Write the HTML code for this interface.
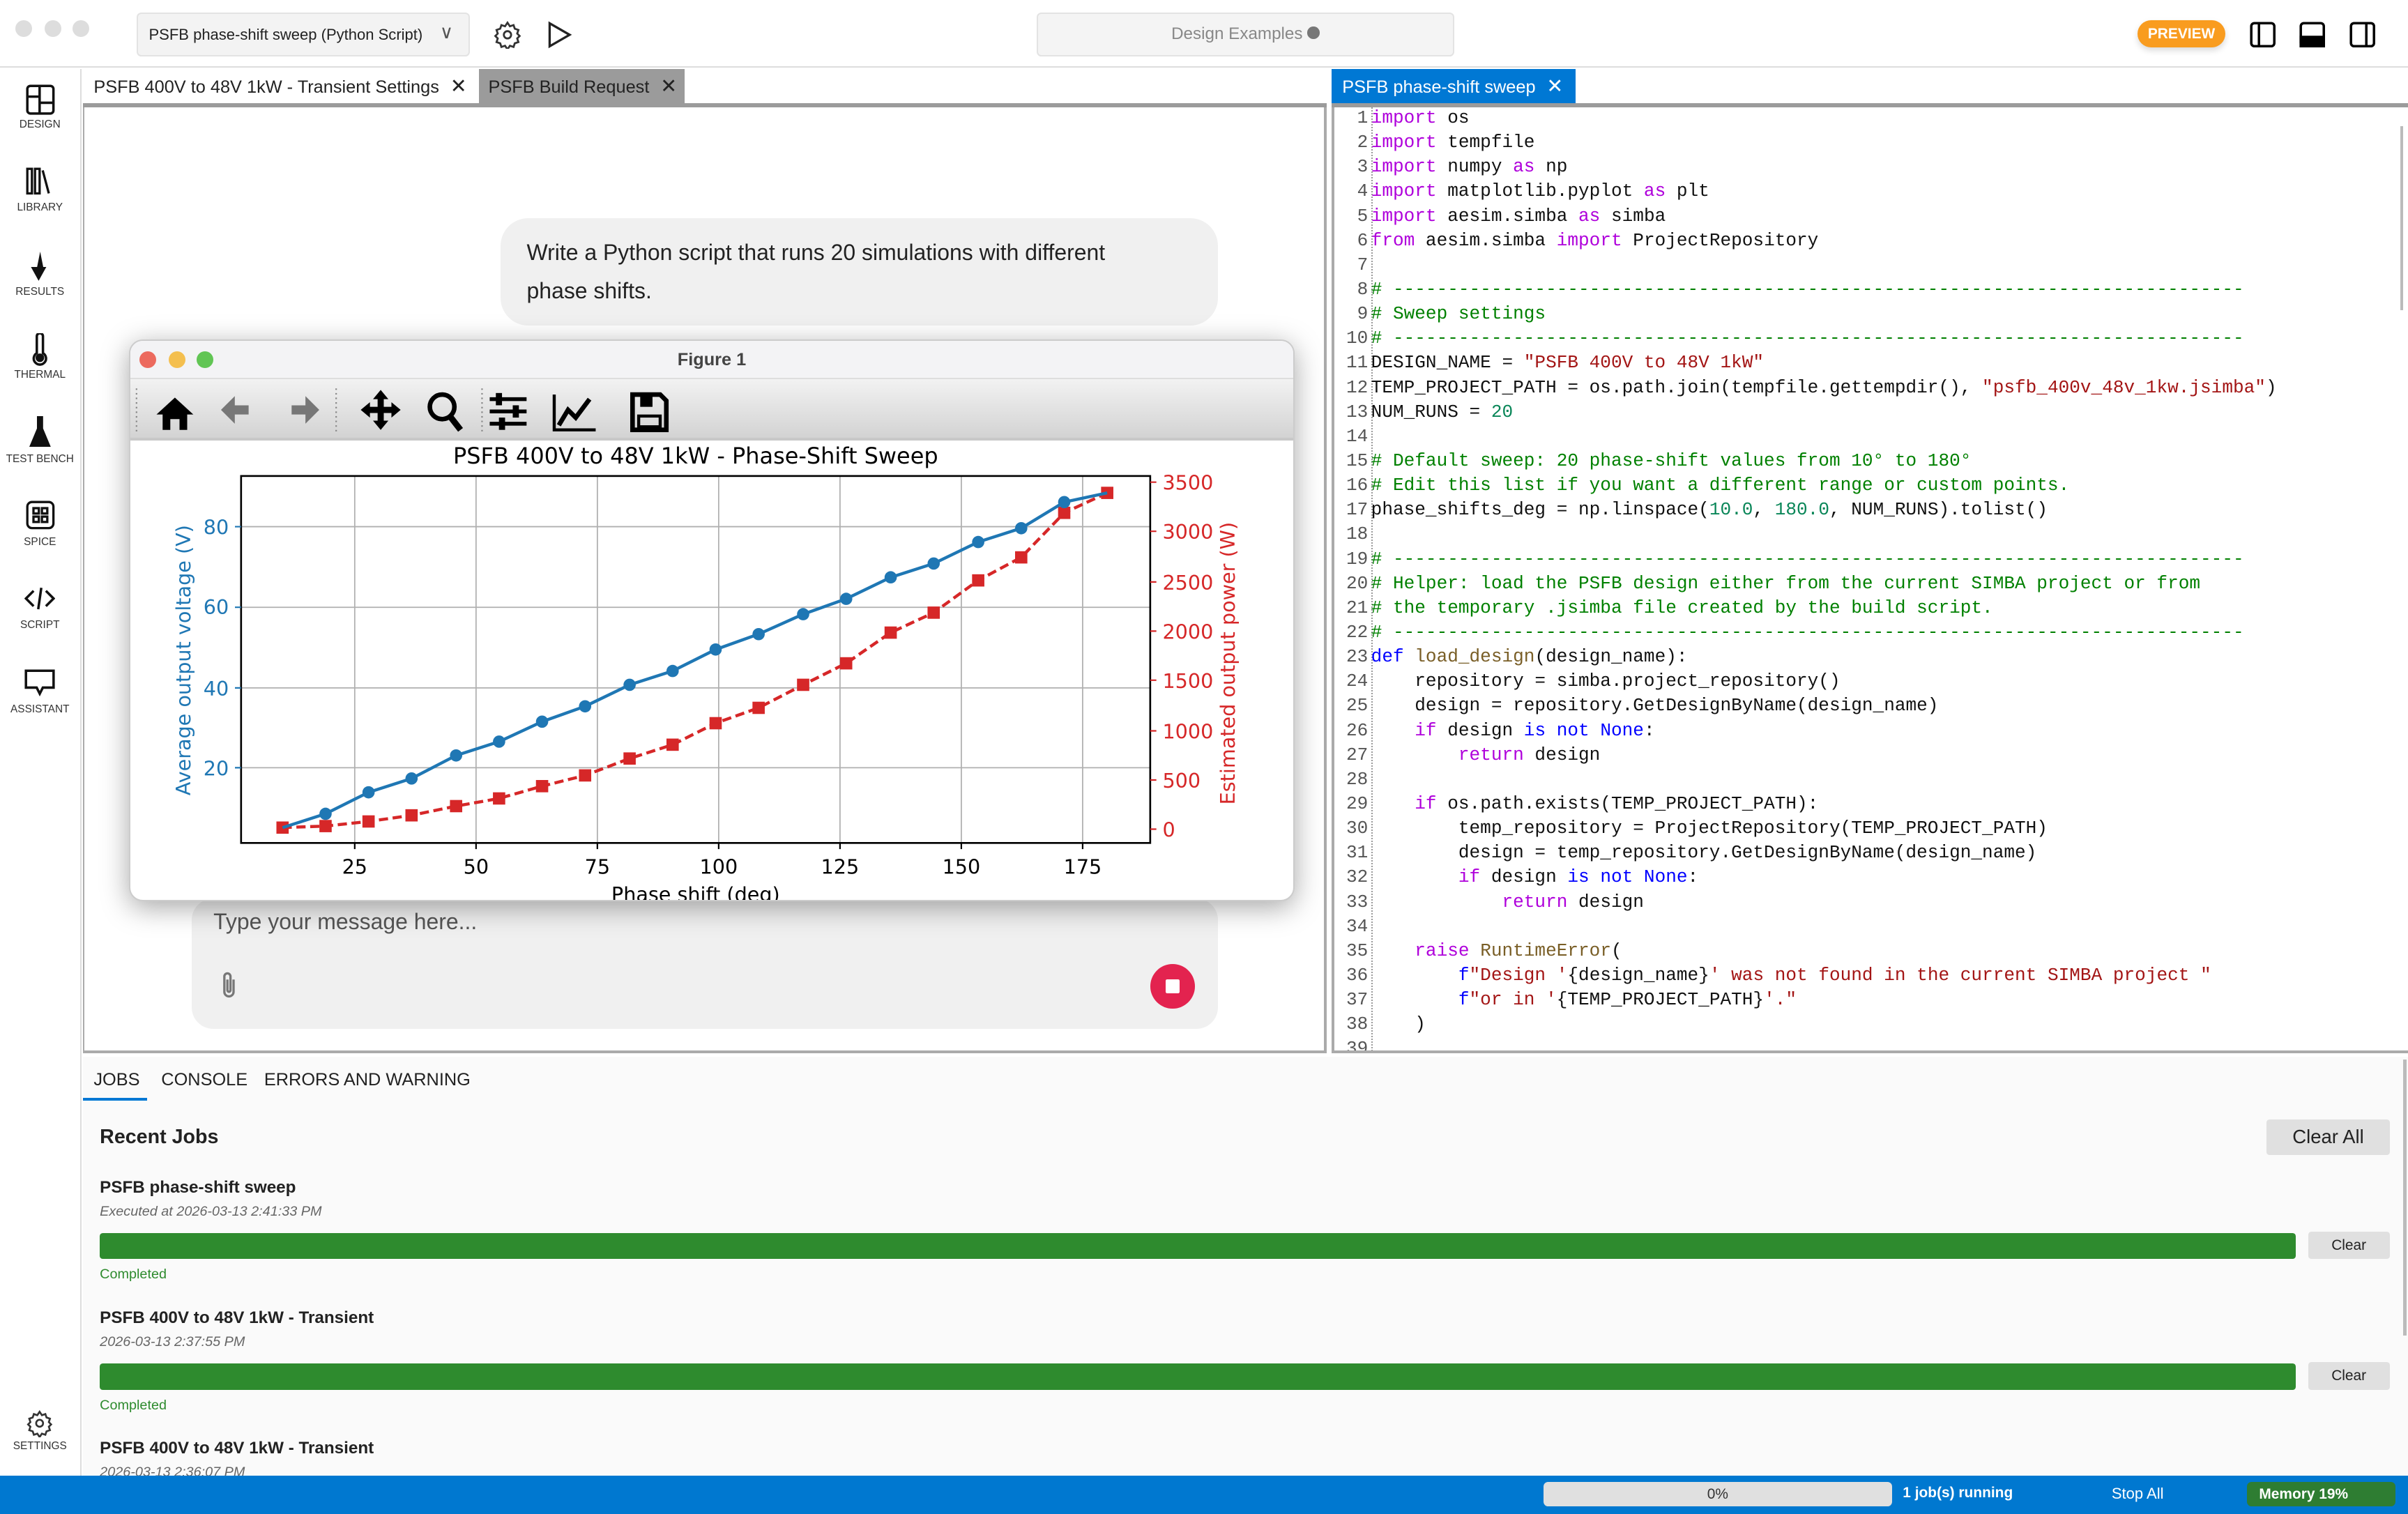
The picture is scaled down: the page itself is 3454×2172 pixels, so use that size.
<!DOCTYPE html>
<html><head><meta charset="utf-8">
<style>
*{box-sizing:border-box;margin:0;padding:0}
html,body{width:3454px;height:2172px;overflow:hidden;background:#fff}
#r{zoom:2.20281;width:1568px;height:986px;position:relative;font-family:"Liberation Sans",sans-serif;color:#222;overflow:hidden;background:#fff}
.a{position:absolute}
.side .it{position:absolute;left:0;width:52px;text-align:center;font-size:7px;color:#333}
.code{font-family:"Liberation Mono",monospace;font-size:11.84px;line-height:15.95px;white-space:pre;color:#111}
.ln{color:#555;text-align:right;width:23px;display:inline-block;padding-right:2px}
.k{color:#af00db}.b{color:#0000ff}.s{color:#a31515}.n{color:#098658}.c{color:#008000}.f{color:#795e26}
</style></head><body><div id="r">
<!-- top bar -->
<div class="a" style="left:0;top:0;width:1568px;height:44px;border-bottom:1px solid #ddd;background:#fff"></div>
<div class="a" style="left:10px;top:13px;width:11px;height:11px;border-radius:50%;background:#ddd"></div>
<div class="a" style="left:29px;top:13px;width:11px;height:11px;border-radius:50%;background:#ddd"></div>
<div class="a" style="left:47px;top:13px;width:11px;height:11px;border-radius:50%;background:#ddd"></div>
<div class="a" style="left:89px;top:8px;width:217px;height:29px;background:#f3f3f3;border:1px solid #e3e3e3;border-radius:3px;font-size:10px;padding:8px 7px">PSFB phase-shift sweep (Python Script)<span style="position:absolute;right:10px;top:5px;font-size:12px;color:#555">&#8744;</span></div>
<svg class="a" style="left:321px;top:13px" width="19" height="19" viewBox="0 0 24 24" fill="none" stroke="#333" stroke-width="1.6"><circle cx="12" cy="12" r="3"/><path d="M12 2l2 3 3-1 1 3 3 1-1 3 2 2-2 2 1 3-3 1-1 3-3-1-2 3-2-3-3 1-1-3-3-1 1-3-2-2 2-2-1-3 3-1 1-3 3 1z"/></svg>
<svg class="a" style="left:356px;top:13px" width="17" height="19" viewBox="0 0 17 19" fill="none" stroke="#222" stroke-width="1.5"><path d="M2 2 L15 9.5 L2 17 Z"/></svg>
<div class="a" style="left:675px;top:8px;width:272px;height:29px;background:#f4f4f4;border:1px solid #e3e3e3;border-radius:3px;font-size:11px;color:#888;text-align:center;padding-top:7px">Design Examples <span style="display:inline-block;width:8px;height:8px;border-radius:50%;background:#777"></span></div>
<div class="a" style="left:1392px;top:13px;width:57px;height:18px;border-radius:9px;background:#f99c1f;color:#fff;font-weight:bold;font-size:9.5px;text-align:center;line-height:18px;box-shadow:0 2px 4px rgba(0,0,0,.15)">PREVIEW</div>
<svg class="a" style="left:1465px;top:14px" width="17" height="17" viewBox="0 0 17 17" fill="none" stroke="#000" stroke-width="1.6"><rect x="1" y="1" width="15" height="15" rx="2"/><path d="M6 1v15"/></svg>
<svg class="a" style="left:1497px;top:14px" width="17" height="17" viewBox="0 0 17 17" stroke="#000" stroke-width="1.6"><rect x="1" y="1" width="15" height="15" rx="2" fill="none"/><rect x="1" y="10" width="15" height="6" fill="#000"/></svg>
<svg class="a" style="left:1530px;top:14px" width="17" height="17" viewBox="0 0 17 17" fill="none" stroke="#000" stroke-width="1.6"><rect x="1" y="1" width="15" height="15" rx="2"/><path d="M11 1v15"/></svg>

<!-- sidebar -->
<div class="side a" style="left:0;top:45px;width:53px;height:916px;background:#fff;border-right:1px solid #ddd">
<svg class="a" style="left:17px;top:10px" width="19" height="20" viewBox="0 0 19 20" fill="none" stroke="#111" stroke-width="1.6"><rect x="1" y="1" width="17" height="18" rx="2"/><path d="M9 1v18M1 8h8M9 12h9"/></svg>
<div class="it" style="top:32px">DESIGN</div>
<svg class="a" style="left:17px;top:64px" width="19" height="18" viewBox="0 0 19 18" fill="none" stroke="#111" stroke-width="1.5"><rect x="1" y="1" width="3" height="16"/><rect x="6" y="1" width="3" height="16"/><path d="M11 2l4 15"/></svg>
<div class="it" style="top:86px">LIBRARY</div>
<svg class="a" style="left:18px;top:119px" width="15" height="20" viewBox="0 0 15 20" fill="#111"><path d="M8 0 L10 10 L6 10 Z M2 10 L12 10 L7 19 Z"/></svg>
<div class="it" style="top:141px">RESULTS</div>
<svg class="a" style="left:20px;top:172px" width="12" height="22" viewBox="0 0 12 22" fill="none" stroke="#111" stroke-width="1.6"><path d="M4 2a2 2 0 014 0v11a4 4 0 11-4 0z"/><circle cx="6" cy="16" r="2" fill="#111"/></svg>
<div class="it" style="top:195px">THERMAL</div>
<svg class="a" style="left:19px;top:226px" width="14" height="20" viewBox="0 0 14 20" fill="#111"><path d="M5 0h4v8l5 12H0l5-12z"/></svg>
<div class="it" style="top:250px">TEST BENCH</div>
<svg class="a" style="left:17px;top:281px" width="19" height="19" viewBox="0 0 19 19" fill="none" stroke="#111" stroke-width="1.5"><rect x="1" y="1" width="17" height="17" rx="3"/><rect x="5" y="5" width="3.5" height="3.5"/><rect x="10.5" y="5" width="3.5" height="3.5"/><rect x="5" y="10.5" width="3.5" height="3.5"/><rect x="10.5" y="10.5" width="3.5" height="3.5"/></svg>
<div class="it" style="top:304px">SPICE</div>
<svg class="a" style="left:16px;top:337px" width="20" height="16" viewBox="0 0 20 16" fill="none" stroke="#111" stroke-width="1.6"><path d="M6 3L1 8l5 5M14 3l5 5-5 5M11 1L9 15"/></svg>
<div class="it" style="top:358px">SCRIPT</div>
<svg class="a" style="left:16px;top:391px" width="20" height="18" viewBox="0 0 20 18" fill="none" stroke="#111" stroke-width="1.6"><path d="M1 1h18v11H12l-2 4-2-4H1z"/></svg>
<div class="it" style="top:413px">ASSISTANT</div>
<svg class="a" style="left:17px;top:873px" width="18" height="18" viewBox="0 0 24 24" fill="none" stroke="#333" stroke-width="1.6"><circle cx="12" cy="12" r="3"/><path d="M12 2l2 3 3-1 1 3 3 1-1 3 2 2-2 2 1 3-3 1-1 3-3-1-2 3-2-3-3 1-1-3-3-1 1-3-2-2 2-2-1-3 3-1 1-3 3 1z"/></svg>
<div class="it" style="top:893px">SETTINGS</div>
</div>

<!-- left tabs -->
<div class="a" style="left:54px;top:45px;width:258px;height:22px;font-size:11.5px;padding:3px 7px;white-space:nowrap">PSFB 400V to 48V 1kW - Transient Settings <span style="margin-left:4px;font-size:13px">&#10005;</span></div>
<div class="a" style="left:312px;top:45px;width:134px;height:22px;background:#9b9b9b;font-size:11.5px;padding:3px 6px;white-space:nowrap">PSFB Build Request <span style="margin-left:4px;font-size:13px">&#10005;</span></div>
<div class="a" style="left:54px;top:67px;width:810px;height:3px;background:#9b9b9b"></div>
<div class="a" style="left:54px;top:70px;width:810px;height:616px;border-left:1px solid #aaa;border-right:2px solid #aaa;border-bottom:2px solid #aaa;background:#fff"></div>
<div class="a" style="left:326px;top:142px;width:467px;height:70px;border-radius:18px;background:#f0f0f0;font-size:14.5px;line-height:25px;padding:10px 30px 10px 17px;color:#222">Write a Python script that runs 20 simulations with different phase shifts.</div>
<div class="a" style="left:125px;top:585px;width:668px;height:85px;border-radius:14px;background:#f0f0f0;font-size:14.5px;color:#555;padding:7px 14px">Type your message here...</div>
<svg class="a" style="left:142px;top:632px" width="14" height="20" viewBox="0 0 14 20" fill="none" stroke="#777" stroke-width="1.5"><path d="M10 6v8a3 3 0 01-6 0V4a2 2 0 014 0v9a1 1 0 01-2 0V6"/></svg>
<div class="a" style="left:749px;top:628px;width:29px;height:29px;border-radius:50%;background:#e3234f"><div style="margin:10px;width:9px;height:9px;background:#fff;border-radius:1px"></div></div>

<!-- figure window -->
<div class="a" style="left:84px;top:221px;width:759px;height:366px;border-radius:9px;background:#fff;box-shadow:0 4px 18px rgba(0,0,0,.35);border:1px solid #ccc;overflow:hidden">
<div style="height:25px;background:#f3f3f5;border-bottom:1px solid #ddd;text-align:center;font-size:11.5px;font-weight:bold;color:#444;padding-top:6px">Figure 1</div>
<div class="a" style="left:6px;top:7px;width:11px;height:11px;border-radius:50%;background:#ec6a5e"></div>
<div class="a" style="left:25px;top:7px;width:11px;height:11px;border-radius:50%;background:#f4bf4f"></div>
<div class="a" style="left:43px;top:7px;width:11px;height:11px;border-radius:50%;background:#61c554"></div>
<div style="height:40px;background:linear-gradient(#f2f2f2,#d3d3d3);border-bottom:2px solid #c8c8c8;position:relative">
<svg class="a" style="left:0;top:0" width="360" height="40" viewBox="0 0 360 40">
<g stroke="#888" stroke-dasharray="1,2"><path d="M4 6v30M134 6v30M229 6v30"/></g>
<path d="M29 12 L17 23 h4 v10 h5 v-7 h6 v7 h5 V23 h4 Z" fill="#000"/>
<path d="M59 20 l9-9 v6 h9 v6 h-9 v6 z" fill="#777"/>
<path d="M123 20 l-9-9 v6 h-9 v6 h9 v6 z" fill="#777"/>
<g fill="#000"><path d="M163 7l-5 6h3v5h-5v-3l-6 5 6 5v-3h5v5h-3l5 6 5-6h-3v-5h5v3l6-5-6-5v3h-5v-5h3z"/></g>
<circle cx="203" cy="18" r="8" fill="none" stroke="#000" stroke-width="3"/><path d="M208 24l7 9" stroke="#000" stroke-width="4"/>
<g stroke="#000" stroke-width="2.5"><path d="M234 13h24M234 21h24M234 29h24"/></g><g fill="#000"><rect x="238" y="9" width="4" height="8"/><rect x="249" y="17" width="4" height="8"/><rect x="240" y="25" width="4" height="8"/></g>
<path d="M276 10v23h27" stroke="#000" stroke-width="2" fill="none"/><path d="M279 30l6-10 5 5 9-12" stroke="#000" stroke-width="3" fill="none"/>
<path d="M327 10h18l4 4v19h-22z" fill="none" stroke="#000" stroke-width="3"/><rect x="332" y="11" width="8" height="7" fill="#000"/><rect x="331" y="24" width="14" height="7" fill="none" stroke="#000" stroke-width="2"/>
</svg></div>
</div>
<!-- plot (page coordinates) -->
<svg class="a" style="left:84px;top:286px" width="759" height="300" viewBox="84 286 759 300" font-family="DejaVu Sans, sans-serif">
<text x="453" y="302" font-size="14.5" text-anchor="middle" fill="#000">PSFB 400V to 48V 1kW - Phase-Shift Sweep</text>
<g stroke="#b0b0b0" stroke-width="0.8">
<path d="M231 310v239M310 310v239M389 310v239M468 310v239M547 310v239M626 310v239M705 310v239"/>
<path d="M157 343h592M157 395.5h592M157 448h592M157 500h592"/>
</g>
<rect x="157" y="310" width="592" height="239" fill="none" stroke="#000" stroke-width="1.2"/>
<g stroke="#000" stroke-width="1"><path d="M231 549v4M310 549v4M389 549v4M468 549v4M547 549v4M626 549v4M705 549v4"/></g>
<g font-size="13" fill="#000" text-anchor="middle"><text x="231" y="569">25</text><text x="310" y="569">50</text><text x="389" y="569">75</text><text x="468" y="569">100</text><text x="547" y="569">125</text><text x="626" y="569">150</text><text x="705" y="569">175</text></g>
<text x="453" y="587" font-size="13" text-anchor="middle" fill="#000">Phase shift (deg)</text>
<g fill="#1f77b4" font-size="13" text-anchor="end"><text x="149" y="348">80</text><text x="149" y="400">60</text><text x="149" y="453">40</text><text x="149" y="505">20</text></g>
<g stroke="#1f77b4"><path d="M153 343h4M153 395.5h4M153 448h4M153 500h4"/></g>
<text transform="translate(124 430) rotate(-90)" font-size="13" fill="#1f77b4" text-anchor="middle">Average output voltage (V)</text>
<g stroke="#d62728"><path d="M749 314h4M749 346h4M749 379h4M749 411h4M749 443h4M749 476h4M749 508h4M749 540h4"/></g>
<g fill="#d62728" font-size="13"><text x="757" y="319">3500</text><text x="757" y="351">3000</text><text x="757" y="384">2500</text><text x="757" y="416">2000</text><text x="757" y="448">1500</text><text x="757" y="481">1000</text><text x="757" y="513">500</text><text x="757" y="545">0</text></g>
<text transform="translate(804 432) rotate(-90)" font-size="13" fill="#d62728" text-anchor="middle">Estimated output power (W)</text>
<polyline fill="none" stroke="#d62728" stroke-width="2" stroke-dasharray="6,3" points="184,539 212,538 240,535 268,531 297,525 325,520 353,512 381,505 410,494 438,485 466,471 494,461 523,446 551,432 580,412 608,399 637,378 665,363 693,334 721,321"/>
<g fill="#d62728"><rect x="180" y="535" width="8" height="8"/><rect x="208" y="534" width="8" height="8"/><rect x="236" y="531" width="8" height="8"/><rect x="264" y="527" width="8" height="8"/><rect x="293" y="521" width="8" height="8"/><rect x="321" y="516" width="8" height="8"/><rect x="349" y="508" width="8" height="8"/><rect x="377" y="501" width="8" height="8"/><rect x="406" y="490" width="8" height="8"/><rect x="434" y="481" width="8" height="8"/><rect x="462" y="467" width="8" height="8"/><rect x="490" y="457" width="8" height="8"/><rect x="519" y="442" width="8" height="8"/><rect x="547" y="428" width="8" height="8"/><rect x="576" y="408" width="8" height="8"/><rect x="604" y="395" width="8" height="8"/><rect x="633" y="374" width="8" height="8"/><rect x="661" y="359" width="8" height="8"/><rect x="689" y="330" width="8" height="8"/><rect x="717" y="317" width="8" height="8"/></g>
<polyline fill="none" stroke="#1f77b4" stroke-width="2" points="184,539 212,530 240,516 268,507 297,492 325,483 353,470 381,460 410,446 438,437 466,423 494,413 523,400 551,390 580,376 608,367 637,353 665,344 693,327 721,321"/>
<g fill="#1f77b4"><circle cx="212" cy="530" r="4"/><circle cx="240" cy="516" r="4"/><circle cx="268" cy="507" r="4"/><circle cx="297" cy="492" r="4"/><circle cx="325" cy="483" r="4"/><circle cx="353" cy="470" r="4"/><circle cx="381" cy="460" r="4"/><circle cx="410" cy="446" r="4"/><circle cx="438" cy="437" r="4"/><circle cx="466" cy="423" r="4"/><circle cx="494" cy="413" r="4"/><circle cx="523" cy="400" r="4"/><circle cx="551" cy="390" r="4"/><circle cx="580" cy="376" r="4"/><circle cx="608" cy="367" r="4"/><circle cx="637" cy="353" r="4"/><circle cx="665" cy="344" r="4"/><circle cx="693" cy="327" r="4"/></g>
</svg>

<!-- right editor -->
<div class="a" style="left:867px;top:45px;width:159px;height:22px;background:#0078d4;color:#fff;font-size:11.5px;padding:3px 7px;white-space:nowrap">PSFB phase-shift sweep <span style="margin-left:4px;font-size:13px">&#10005;</span></div>
<div class="a" style="left:867px;top:67px;width:701px;height:3px;background:#9b9b9b"></div>
<div class="a" style="left:867px;top:70px;width:701px;height:616px;border-left:2px solid #aaa;border-bottom:2px solid #aaa;overflow:hidden;background:#fff">
<div class="a" style="left:24px;top:0;height:620px;border-left:1px dotted #999"></div>
<div class="a code" style="left:1px;top:-1px"><span class="ln">1</span><span class="k">import</span> os
<span class="ln">2</span><span class="k">import</span> tempfile
<span class="ln">3</span><span class="k">import</span> numpy <span class="k">as</span> np
<span class="ln">4</span><span class="k">import</span> matplotlib.pyplot <span class="k">as</span> plt
<span class="ln">5</span><span class="k">import</span> aesim.simba <span class="k">as</span> simba
<span class="ln">6</span><span class="k">from</span> aesim.simba <span class="k">import</span> ProjectRepository
<span class="ln">7</span>
<span class="ln">8</span><span class="c"># ------------------------------------------------------------------------------</span>
<span class="ln">9</span><span class="c"># Sweep settings</span>
<span class="ln">10</span><span class="c"># ------------------------------------------------------------------------------</span>
<span class="ln">11</span>DESIGN_NAME = <span class="s">"PSFB 400V to 48V 1kW"</span>
<span class="ln">12</span>TEMP_PROJECT_PATH = os.path.join(tempfile.gettempdir(), <span class="s">"psfb_400v_48v_1kw.jsimba"</span>)
<span class="ln">13</span>NUM_RUNS = <span class="n">20</span>
<span class="ln">14</span>
<span class="ln">15</span><span class="c"># Default sweep: 20 phase-shift values from 10° to 180°</span>
<span class="ln">16</span><span class="c"># Edit this list if you want a different range or custom points.</span>
<span class="ln">17</span>phase_shifts_deg = np.linspace(<span class="n">10.0</span>, <span class="n">180.0</span>, NUM_RUNS).tolist()
<span class="ln">18</span>
<span class="ln">19</span><span class="c"># ------------------------------------------------------------------------------</span>
<span class="ln">20</span><span class="c"># Helper: load the PSFB design either from the current SIMBA project or from</span>
<span class="ln">21</span><span class="c"># the temporary .jsimba file created by the build script.</span>
<span class="ln">22</span><span class="c"># ------------------------------------------------------------------------------</span>
<span class="ln">23</span><span class="b">def</span> <span class="f">load_design</span>(design_name):
<span class="ln">24</span>    repository = simba.project_repository()
<span class="ln">25</span>    design = repository.GetDesignByName(design_name)
<span class="ln">26</span>    <span class="k">if</span> design <span class="b">is not None</span>:
<span class="ln">27</span>        <span class="k">return</span> design
<span class="ln">28</span>
<span class="ln">29</span>    <span class="k">if</span> os.path.exists(TEMP_PROJECT_PATH):
<span class="ln">30</span>        temp_repository = ProjectRepository(TEMP_PROJECT_PATH)
<span class="ln">31</span>        design = temp_repository.GetDesignByName(design_name)
<span class="ln">32</span>        <span class="k">if</span> design <span class="b">is not None</span>:
<span class="ln">33</span>            <span class="k">return</span> design
<span class="ln">34</span>
<span class="ln">35</span>    <span class="k">raise</span> <span class="f">RuntimeError</span>(
<span class="ln">36</span>        <span class="b">f</span><span class="s">"Design '</span>{design_name}<span class="s">' was not found in the current SIMBA project "</span>
<span class="ln">37</span>        <span class="b">f</span><span class="s">"or in '</span>{TEMP_PROJECT_PATH}<span class="s">'."</span>
<span class="ln">38</span>    )
<span class="ln">39</span></div>
<div class="a" style="left:694px;top:12px;width:2px;height:120px;background:#bbb"></div>
</div>

<!-- bottom panel -->
<div class="a" style="left:54px;top:688px;width:1514px;height:273px;background:#fafafa"></div>
<div class="a" style="left:61px;top:697px;font-size:11.5px">JOBS</div>
<div class="a" style="left:54px;top:715px;width:42px;height:2px;background:#0078d4"></div>
<div class="a" style="left:105px;top:697px;font-size:11.5px">CONSOLE</div>
<div class="a" style="left:172px;top:697px;font-size:11.5px">ERRORS AND WARNING</div>
<div class="a" style="left:65px;top:733px;font-size:13px;font-weight:bold">Recent Jobs</div>
<div class="a" style="left:1476px;top:729px;width:80px;height:23px;background:#e0e0e0;border-radius:2px;font-size:12.5px;text-align:center;line-height:23px">Clear All</div>
<div class="a" style="left:65px;top:767px;font-size:11px;font-weight:bold">PSFB phase-shift sweep</div>
<div class="a" style="left:65px;top:784px;font-size:9px;font-style:italic;color:#666">Executed at 2026-03-13 2:41:33 PM</div>
<div class="a" style="left:65px;top:803px;width:1430px;height:17px;background:#2e8b2e;border-radius:2px"></div>
<div class="a" style="left:1503px;top:802px;width:53px;height:18px;background:#e0e0e0;border-radius:2px;font-size:9.5px;text-align:center;line-height:18px">Clear</div>
<div class="a" style="left:65px;top:825px;font-size:9px;color:#2e8b2e">Completed</div>
<div class="a" style="left:65px;top:852px;font-size:11px;font-weight:bold">PSFB 400V to 48V 1kW - Transient</div>
<div class="a" style="left:65px;top:869px;font-size:9px;font-style:italic;color:#666">2026-03-13 2:37:55 PM</div>
<div class="a" style="left:65px;top:888px;width:1430px;height:17px;background:#2e8b2e;border-radius:2px"></div>
<div class="a" style="left:1503px;top:887px;width:53px;height:18px;background:#e0e0e0;border-radius:2px;font-size:9.5px;text-align:center;line-height:18px">Clear</div>
<div class="a" style="left:65px;top:910px;font-size:9px;color:#2e8b2e">Completed</div>
<div class="a" style="left:65px;top:937px;font-size:11px;font-weight:bold">PSFB 400V to 48V 1kW - Transient</div>
<div class="a" style="left:65px;top:954px;font-size:9px;font-style:italic;color:#666">2026-03-13 2:36:07 PM</div>
<div class="a" style="left:1565px;top:690px;width:2px;height:180px;background:#bbb"></div>

<!-- status bar -->
<div class="a" style="left:0;top:961px;width:1568px;height:25px;background:#0078d0"></div>
<div class="a" style="left:1005px;top:965px;width:227px;height:16px;background:#e0e0e0;border-radius:3px;font-size:9.5px;text-align:center;line-height:16px;color:#333">0%</div>
<div class="a" style="left:1239px;top:967px;font-size:9.5px;color:#fff;font-weight:bold">1 job(s) running</div>
<div class="a" style="left:1375px;top:967px;font-size:10px;color:#fff">Stop All</div>
<div class="a" style="left:1463px;top:965px;width:97px;height:16px;background:#2e7d32;border-radius:3px;font-size:9.5px;color:#fff;font-weight:bold;padding:3px 8px">Memory 19%</div>
</div></body></html>
